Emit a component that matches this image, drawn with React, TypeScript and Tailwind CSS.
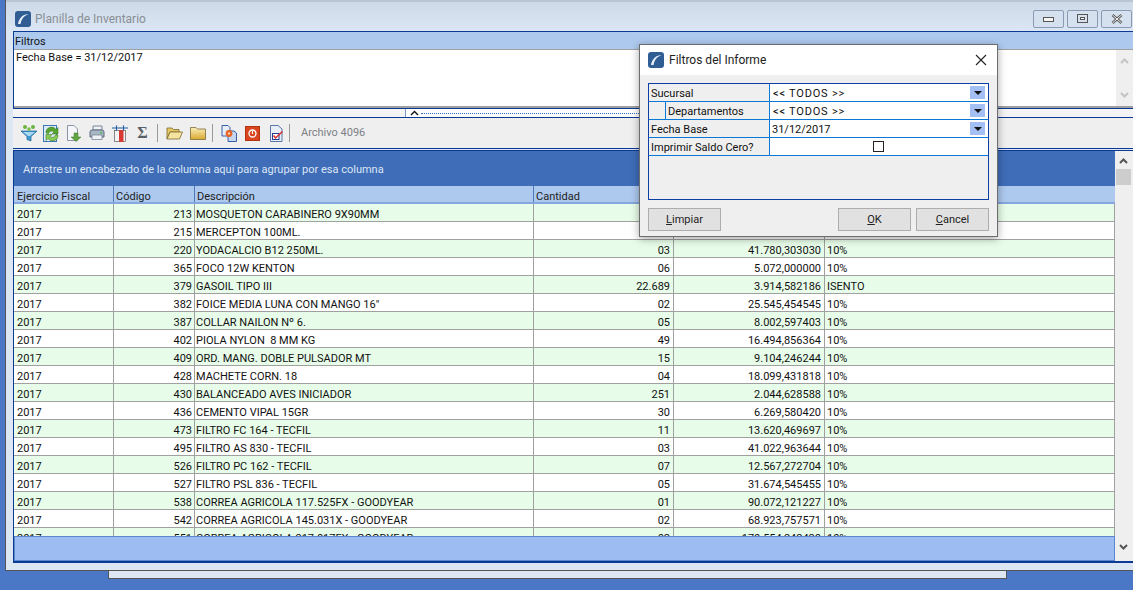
const rows = [
  ["213", "MOSQUETON CARABINERO 9X90MM", "", "", ""],
  ["215", "MERCEPTON 100ML.", "", "", ""],
  ["220", "YODACALCIO B12 250ML.", "03", "41.780,303030", "10%"],
  ["365", "FOCO 12W KENTON", "06", "5.072,000000", "10%"],
  ["379", "GASOIL TIPO III", "22.689", "3.914,582186", "ISENTO"],
  ["382", "FOICE MEDIA LUNA CON MANGO 16\"", "02", "25.545,454545", "10%"],
  ["387", "COLLAR NAILON Nº 6.", "05", "8.002,597403", "10%"],
  ["402", "PIOLA NYLON  8 MM KG", "49", "16.494,856364", "10%"],
  ["409", "ORD. MANG. DOBLE PULSADOR MT", "15", "9.104,246244", "10%"],
  ["428", "MACHETE CORN. 18", "04", "18.099,431818", "10%"],
  ["430", "BALANCEADO AVES INICIADOR", "251", "2.044,628588", "10%"],
  ["436", "CEMENTO VIPAL 15GR", "30", "6.269,580420", "10%"],
  ["473", "FILTRO FC 164 - TECFIL", "11", "13.620,469697", "10%"],
  ["495", "FILTRO AS 830 - TECFIL", "03", "41.022,963644", "10%"],
  ["526", "FILTRO PC 162 - TECFIL", "07", "12.567,272704", "10%"],
  ["527", "FILTRO PSL 836 - TECFIL", "05", "31.674,545455", "10%"],
  ["538", "CORREA AGRICOLA 117.525FX - GOODYEAR", "01", "90.072,121227", "10%"],
  ["542", "CORREA AGRICOLA 145.031X - GOODYEAR", "02", "68.923,757571", "10%"],
  ["551", "CORREA AGRICOLA 217.017FX - GOODYEAR", "02", "170.554,242420", "10%"],
];

function Logo({ size }: { size: number }) {
  return (
    <svg width={size} height={size} viewBox="0 0 16 16" className="shrink-0">
      <rect width="16" height="16" rx="3" fill="#2f5d94" />
      <path d="M3 13C4 7 8 3 14 3C10 4.500 7 6 5.500 13Z" fill="#e8f0f8" />
    </svg>
  );
}

function Sep({ ml }: { ml: string }) {
  return <div className={`${ml} w-px h-[18px] bg-[#9a9a9a] shrink-0`} />;
}

function ToolIcons() {
  return (
    <div className="flex items-center h-full">
      <svg width="18" height="18" viewBox="0 0 18 18" className="ml-[7px] shrink-0">
        <path d="M1 7H17L11 12.500V17L7 15.500V12.500Z" fill="#3f9bd0" stroke="#1e5f96" strokeWidth="0.7" />
        <path d="M3 8H15L10 12H8Z" fill="#a8d8f0" />
        <circle cx="5" cy="3" r="2" fill="#6cb33f" />
        <circle cx="9" cy="5" r="1.800" fill="#7cc04a" />
        <circle cx="13" cy="3" r="2" fill="#6cb33f" />
      </svg>
      <svg width="17" height="17" viewBox="0 0 17 17" className="ml-[5px] shrink-0">
        <rect x="0.500" y="0.500" width="13" height="16" fill="#dce9f6" stroke="#3c78b4" />
        <path d="M3 8A5.500 5.500 0 0 1 13 4.500L15 2.500V9H9L11 7A3.300 3.300 0 0 0 5.500 8.500Z" fill="#55a630" stroke="#2f6f16" strokeWidth="0.5" />
        <path d="M15 10A5.500 5.500 0 0 1 5 13.500L3 15.500V9.500H9L7 11.500A3.300 3.300 0 0 0 12.500 10Z" fill="#8ccc55" stroke="#2f6f16" strokeWidth="0.5" />
      </svg>
      <svg width="16" height="17" viewBox="0 0 16 17" className="ml-[6px] shrink-0">
        <path d="M1.500 0.500H8L11.500 4V15.500H1.500Z" fill="#f4f6f9" stroke="#8a94a6" />
        <path d="M8 8H12V12H15L10 16.500L5 12H8Z" fill="#5fa544" stroke="#3c7a2a" strokeWidth="0.5" />
      </svg>
      <svg width="16" height="16" viewBox="0 0 16 16" className="ml-[7px] shrink-0">
        <path d="M4 1H13V5H4Z" fill="#eef1f5" stroke="#7a8696" />
        <path d="M1 7Q1 5 3 5H13Q15 5 15 7V12H1Z" fill="#a9b6c6" stroke="#5c6b7e" />
        <rect x="3" y="10" width="10" height="4.500" fill="#eef1f5" stroke="#6b7a8c" strokeWidth="0.7" />
        <rect x="11" y="7" width="2" height="1.500" fill="#45c14a" />
      </svg>
      <svg width="16" height="17" viewBox="0 0 16 17" className="ml-[7px] shrink-0">
        <rect x="2.500" y="5.500" width="11" height="11" fill="#f3f3f3" stroke="#444" strokeWidth="0.6" />
        <rect x="7" y="5" width="4.500" height="12" fill="#d63a32" />
        <path d="M0 3H16M4.500 0.500V5.500M11.500 0.500V5.500" stroke="#1d5fa8" strokeWidth="1.100" fill="none" />
      </svg>
      <span className="ml-[9px] w-[11px] text-center text-[16px] leading-4 font-bold text-[#5a5f66] font-['Liberation_Serif',serif]">Σ</span>
      <Sep ml="ml-[9px]" />
      <svg width="17" height="16" viewBox="0 0 17 16" className="ml-[8px] shrink-0">
        <path d="M1 3H6L7.500 4.500H13V7H4L1 14Z" fill="#e8c766" stroke="#7c6a2a" strokeWidth="0.8" />
        <path d="M4 7H16.500L13.500 14H1Z" fill="#f5e3a0" stroke="#7c6a2a" strokeWidth="0.8" />
      </svg>
      <svg width="16" height="16" viewBox="0 0 16 16" className="ml-[7px] shrink-0">
        <defs>
          <linearGradient id="fold" x1="0" y1="0" x2="0" y2="1">
            <stop offset="0" stopColor="#fbeeb8" />
            <stop offset="1" stopColor="#d9a92f" />
          </linearGradient>
        </defs>
        <path d="M0.500 2.500H6L7.500 4H15.500V14.500H0.500Z" fill="url(#fold)" stroke="#7c6a3a" strokeWidth="0.8" />
      </svg>
      <Sep ml="ml-[6px]" />
      <svg width="16" height="17" viewBox="0 0 16 17" className="ml-[8px] shrink-0">
        <path d="M1 0.500H7L9 2.500V11H1Z" fill="#e6eefa" stroke="#3a5fa8" />
        <path d="M7 6H13L15.500 8V16.500H7Z" fill="#c6d6f0" stroke="#3a5fa8" />
        <circle cx="8" cy="8.500" r="3.400" fill="#e8662a" />
        <circle cx="8" cy="8.500" r="1.100" fill="#fbe3c8" />
      </svg>
      <svg width="15" height="15" viewBox="0 0 15 15" className="ml-[8px] shrink-0">
        <rect x="0.500" y="0.500" width="14" height="14" fill="#d8451f" stroke="#b5320f" />
        <circle cx="7.500" cy="7.500" r="3.500" fill="none" stroke="#fff" strokeWidth="1.300" />
        <path d="M7.500 5V8" stroke="#fff" strokeWidth="1.200" />
      </svg>
      <svg width="15" height="17" viewBox="0 0 15 17" className="ml-[9px] shrink-0">
        <path d="M1.500 0.500H9L13 4V16.500H1.500Z" fill="#e9eff9" stroke="#5d74a8" />
        <rect x="3.500" y="8.500" width="6.500" height="6" fill="#fff" stroke="#1f3f8f" />
        <path d="M4.500 10.500L6.500 13L13.500 6.500" fill="none" stroke="#d92b2b" strokeWidth="1.500" />
      </svg>
      <Sep ml="ml-[5px]" />
      <span className="ml-[11px] text-[#7c8086] text-[11px]">Archivo 4096</span>
    </div>
  );
}

function Arrow({ up }: { up?: boolean }) {
  return (
    <svg width="9" height="7" viewBox="0 0 9 7">
      <path d={up ? "M1 6L4.500 2.500L8 6" : "M1 1L4.500 4.500L8 1"} fill="none" stroke="currentColor" strokeWidth="2" />
    </svg>
  );
}

function FilterRow({ label, value, indent, drop, check, wide }: { label: string; value?: string; indent?: boolean; drop?: boolean; check?: boolean; wide?: boolean }) {
  return (
    <div className="flex h-[18px] border-b-[1px] border-[#0a78d7] text-[11px] leading-[19px]">
      {indent && <div className="w-[17px] border-r border-[#0a78d7] bg-[#efefef]" />}
      <div className={`${indent ? "w-[104px] pl-[2px]" : "w-[121px] pl-[2px]"} border-r border-[#0a78d7] bg-[#efefef] text-[#111]`}>{label}</div>
      <div className="flex-1 bg-white flex items-center pl-[2px] pr-[3px] text-[#111]">
        {check ? (
          <div className="mx-auto w-[11px] h-[11px] border border-[#222] bg-white" />
        ) : (
          <>
            <span className={`flex-1 pt-[1px] ${wide ? "pl-px tracking-[0.8px]" : ""}`}>{value}</span>
            {drop && (
              <div className="w-[15px] h-[13px] bg-[#a3bff3] flex items-center justify-center">
                <div className="w-0 h-0 border-x-[4px] border-x-transparent border-t-[4px] border-t-[#111]" />
              </div>
            )}
          </>
        )}
      </div>
    </div>
  );
}

function DlgButton({ k, rest, w }: { k: string; rest: string; w: string }) {
  return (
    <button className={`${w} h-[23px] bg-[#e1e1e1] border border-[#adadad] text-[11px] text-[#222] pt-px`}>
      <span className="underline">{k}</span>
      {rest}
    </button>
  );
}

export default function App() {
  return (
    <div className="relative w-[1133px] h-[590px] overflow-hidden bg-[#4a78c6] font-['Roboto',sans-serif] text-[11px] text-[#222]">
      {/* ventana principal */}
      <div className="absolute left-[5px] top-0 w-[1128px] h-[571px] border-l border-b border-[#555] bg-[#dce7f3] flex flex-col">
        <div className="h-[31px] shrink-0 flex items-center pl-[9px] pt-[4px] bg-gradient-to-b from-[#cdd9e6] to-[#dbe7f4] border-t-[2px] border-[#b9c5d2]">
          <Logo size={16} />
          <span className="ml-[4px] pt-px text-[12px] text-[#8a8f96]">Planilla de Inventario</span>
          <div className="ml-auto flex gap-[3px] mr-[1px]">
            <div className="w-[31px] h-[18px] border border-[#8a9ab5] rounded-[2px] bg-[#d5e1ee] flex items-center justify-center">
              <div className="w-[11px] h-[5px] border border-[#555] bg-[#f5f5f5] mt-[2px]" />
            </div>
            <div className="w-[31px] h-[18px] border border-[#8a9ab5] rounded-[2px] bg-[#d5e1ee] flex items-center justify-center">
              <div className="w-[11px] h-[9px] border border-[#555] flex items-center justify-center">
                <div className="w-[5px] h-[3px] border border-[#555] bg-white" />
              </div>
            </div>
            <div className="w-[31px] h-[18px] border border-[#8a9ab5] rounded-[2px] bg-[#d5e1ee] flex items-center justify-center text-[#555]">
              <svg width="12" height="10" viewBox="0 0 12 10">
                <path d="M1.500 1L10.500 9M10.500 1L1.500 9" stroke="#555" strokeWidth="2.600" />
                <path d="M1.500 1L10.500 9M10.500 1L1.500 9" stroke="#f5f5f5" strokeWidth="1" />
              </svg>
            </div>
          </div>
        </div>
        {/* filtros */}
        <div className="ml-[7px] h-[77px] border-t border-x border-[#0b3a94] border-r-0 flex flex-col shrink-0">
          <div className="h-[17px] bg-[#adc9ee] leading-[19px] pl-[1px] text-[#111]">Filtros</div>
          <div className="flex-1 flex bg-white border-t border-b-[2px] border-[#a0a0a0] min-h-0">
            <div className="flex-1 pl-[2px] leading-[15px] text-[#111]">Fecha Base = 31/12/2017</div>
            <div className="w-[17px] bg-[#efefef] flex flex-col items-center justify-between py-[7px] text-[#c4c4c4]">
              <Arrow up />
              <Arrow />
            </div>
          </div>
        </div>
        {/* separador */}
        <div className="ml-[7px] h-[9px] border-t border-[#0b3a94] bg-[#f4f4f4] relative shrink-0">
          <div className="absolute left-[392px] top-0 w-[330px] h-[8px] border-l border-[#7c9cc8] bg-white flex items-center">
            <svg width="9" height="6" viewBox="0 0 9 6" className="ml-[4px] shrink-0">
              <path d="M1 5L4.500 1.500L8 5" fill="none" stroke="#111" strokeWidth="1.400" />
            </svg>
            <div className="flex-1 mx-[2px] border-t border-dotted border-[#2b6fc0]" />
          </div>
        </div>
        {/* barra de herramientas */}
        <div className="ml-[7px] h-[32px] border-t border-b border-[#0b3a94] bg-[#efefef] shrink-0">
          <ToolIcons />
        </div>
        {/* grilla */}
        <div className="ml-[7px] mt-px border-t border-b-[2px] border-l border-[#0b3a94] flex flex-col h-[413px] shrink-0 relative">
          <div className="h-[35px] bg-[#3f6db8] text-[#dce7f6] pl-[9px] leading-[37px] shrink-0 mr-[18px]">Arrastre un encabezado de la columna aqui para agrupar por esa columna</div>
          <div className="flex h-[18px] bg-[#adc9ee] border-b-[2px] border-[#86a7dd] shrink-0 leading-[21px] text-[#222] mr-[18px]">
            <div className="w-[100px] border-r border-[#4f78ba] pl-[3px]">Ejercicio Fiscal</div>
            <div className="w-[81px] border-r border-[#4f78ba] pl-[2px]">Código</div>
            <div className="w-[339px] border-r border-[#4f78ba] pl-[2px]">Descripción</div>
            <div className="flex-1 pl-[2px]">Cantidad</div>
          </div>
          <div className="flex-1 min-h-0 overflow-hidden mr-[18px] border-r border-[#a0a0a0] text-[#111]">
            {rows.map((r, i) => (
              <div key={r[0]} className={`flex h-[18px] border-b border-[#a0a0a0] leading-[21px] whitespace-pre ${i % 2 === 0 ? "bg-[#e8fde9]" : "bg-white"}`}>
                <div className="w-[100px] border-r border-[#a0a0a0] pl-[3px]">2017</div>
                <div className="w-[81px] border-r border-[#a0a0a0] text-right pr-[2px]">{r[0]}</div>
                <div className="w-[339px] border-r border-[#a0a0a0] pl-[1px]">{r[1]}</div>
                <div className="w-[140px] border-r border-[#a0a0a0] text-right pr-[3px]">{r[2]}</div>
                <div className="w-[151px] border-r border-[#a0a0a0] text-right pr-[3px]">{r[3]}</div>
                <div className="flex-1 pl-[2px]">{r[4]}</div>
              </div>
            ))}
          </div>
          <div className="h-[25px] bg-[#9dbcf2] border border-[#5b86d0] shrink-0 mr-[18px]" />
          <div className="absolute right-0 top-0 bottom-0 w-[18px] bg-[#efefef] flex flex-col items-start text-[#555]">
            <div className="h-[18px] w-[16px] flex items-center justify-center"><Arrow up /></div>
            <div className="w-[15px] h-[16px] ml-px bg-[#cdcdcd]" />
            <div className="mt-auto h-[17px] w-[16px] flex items-start justify-center"><Arrow /></div>
          </div>
        </div>
      </div>
      {/* barra de desplazamiento inferior */}
      <div className="absolute left-[108px] top-[571px] w-[899px] h-[8px] bg-[#dce7f3] border-x border-b border-[#555]" />

      {/* dialogo */}
      <div className="absolute left-[639px] top-[44px] w-[359px] h-[193px] border border-[#6d6d6d] bg-[#efefef] shadow-[0_2px_8px_rgba(0,0,0,0.35)] flex flex-col">
        <div className="h-[30px] bg-white flex items-center pl-[8px] shrink-0">
          <Logo size={16} />
          <span className="ml-[5px] text-[12px] text-[#222]">Filtros del Informe</span>
          <svg width="12" height="12" viewBox="0 0 12 12" className="ml-auto mr-[10px]">
            <path d="M1 1L11 11M11 1L1 11" stroke="#222" strokeWidth="1.100" />
          </svg>
        </div>
        <div className="mx-[8px] mt-[8px] h-[117px] border border-[#0b3fa6] shrink-0">
          <FilterRow label="Sucursal" value="<< TODOS >>" drop wide />
          <FilterRow label="Departamentos" value="<< TODOS >>" drop indent wide />
          <FilterRow label="Fecha Base" value="31/12/2017" drop />
          <FilterRow label="Imprimir Saldo Cero?" check />
        </div>
        <div className="mx-[8px] mt-[8px] flex">
          <DlgButton k="L" rest="impiar" w="w-[73px]" />
          <div className="ml-auto flex gap-[5px]">
            <DlgButton k="O" rest="K" w="w-[73px]" />
            <DlgButton k="C" rest="ancel" w="w-[73px]" />
          </div>
        </div>
      </div>
    </div>
  );
}
